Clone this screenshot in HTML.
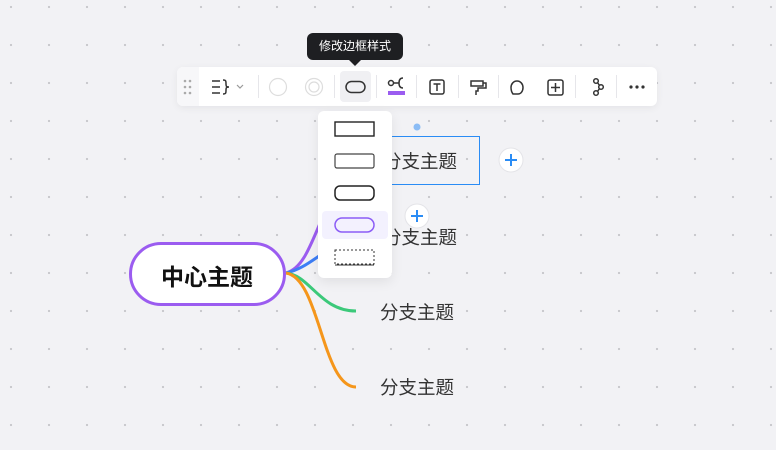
<!DOCTYPE html>
<html><head><meta charset="utf-8"><style>
*{margin:0;padding:0;box-sizing:border-box}
body{width:776px;height:450px;overflow:hidden;background:#f2f2f5;position:relative;font-family:"Liberation Sans","Noto Sans CJK SC",sans-serif;
background-image:radial-gradient(circle,#c8c8cc 1px,transparent 1.3px);background-size:38px 38px;background-position:-8px -12px}
.abs{position:absolute}
.tb{left:177px;top:67px;width:480px;height:39px;background:#fff;border-radius:6px;box-shadow:0 2px 8px rgba(0,0,0,.06)}
.sep{position:absolute;top:8px;width:1px;height:23px;background:#e6e6ea}
.tip{left:307px;top:33px;width:96px;height:27px;background:#1e1f22;border-radius:6px;color:#fff;font-size:12px;line-height:27px;text-align:center}
.tip:after{content:"";position:absolute;left:42px;bottom:-6px;border:6px solid transparent;border-top-color:#1e1f22;border-bottom:0}
.dd{left:318px;top:111px;width:74px;height:167px;background:#fff;border-radius:6px;box-shadow:0 4px 12px rgba(0,0,0,.08)}
.br{font-size:18.5px;color:#333;left:380px}
</style></head><body>
<svg class="abs" style="left:0;top:0" width="776" height="450">
<path d="M286 273 C305 268 312 240 330 200" stroke="#9b5cf0" stroke-width="3" fill="none"/>
<path d="M286 273 C300 270 310 262 322 254" stroke="#3d7ef5" stroke-width="3" fill="none"/>
<path d="M286 273 C310 275 320 311 356 311" stroke="#3cc97a" stroke-width="3" fill="none"/>
<path d="M286 273 C320 278 322 387 356 387" stroke="#f5961b" stroke-width="3" fill="none"/>
<rect x="130.5" y="243.5" width="154" height="61" rx="30.5" fill="#fff" stroke="#9b5cf0" stroke-width="3"/>
<rect x="370.5" y="136.5" width="109" height="48" fill="none" stroke="#2a8cf5" stroke-width="1"/>
<circle cx="417" cy="127" r="3.5" fill="#8bbcf5"/>
<circle cx="511" cy="160" r="12" fill="#fff" stroke="#e4e4e8"/>
<path d="M505 160h12M511 154v12" stroke="#2a8cf5" stroke-width="2"/>
<circle cx="417" cy="216" r="12" fill="#fff" stroke="#e4e4e8"/>
<path d="M411 216h12M417 210v12" stroke="#2a8cf5" stroke-width="2"/>
</svg>
<div class="abs" style="left:130px;top:258px;width:154px;text-align:center;font-size:23px;font-weight:bold;color:#111">中心主题</div>
<div class="abs br" style="top:148px;left:383px">分支主题</div>
<div class="abs br" style="top:224px;left:383px">分支主题</div>
<div class="abs br" style="top:299px">分支主题</div>
<div class="abs br" style="top:374px">分支主题</div>

<div class="abs tip">修改边框样式</div>
<div class="abs tb">
<div class="abs" style="left:0;top:0;width:22px;height:39px;background:#f7f7f9;border-radius:6px 0 0 6px"></div>
<div class="abs" style="left:163px;top:4px;width:31px;height:31px;background:#f0f0f3;border-radius:4px"></div>
<div class="sep" style="left:81px"></div><div class="sep" style="left:157px"></div><div class="sep" style="left:199px"></div>
<div class="sep" style="left:239px"></div><div class="sep" style="left:281px"></div><div class="sep" style="left:321px"></div>
<div class="sep" style="left:398px"></div><div class="sep" style="left:439px"></div>
<svg class="abs" style="left:0;top:0" width="480" height="39" fill="none" stroke="#333" stroke-width="1.5">
<g fill="#aaa" stroke="none"><circle cx="8" cy="14" r="1.3"/><circle cx="13" cy="14" r="1.3"/><circle cx="8" cy="20" r="1.3"/><circle cx="13" cy="20" r="1.3"/><circle cx="8" cy="26" r="1.3"/><circle cx="13" cy="26" r="1.3"/></g>
<path d="M35 14h8M35 20h8M35 26h8M46 13c3 0 3 1 3 4s1 3 3 3c-2 0-3 0-3 3s0 4-3 4"/>
<path d="M60 18l3 3 3-3" stroke="#999" stroke-width="1.2"/>
<circle cx="101" cy="20" r="8.5" stroke="#ddd" stroke-width="1.2"/>
<circle cx="137" cy="20" r="8.5" stroke="#ddd" stroke-width="1.2"/><circle cx="137" cy="20" r="5" stroke="#ddd" stroke-width="1.2"/>
<rect x="169" y="14.5" width="19" height="11" rx="5.5"/>
<circle cx="214" cy="16" r="2.5"/><path d="M216.5 16h6M226 11c-3 0-4 2-4 5s1 5 4 5"/>
<rect x="211" y="24" width="17" height="4" fill="#9b5cf0" stroke="none"/>
<rect x="253" y="13" width="14" height="14" rx="2"/><path d="M256.5 17h7M260 17v7"/>
<path d="M294 14h12v5h-12zM306 16h3v5h-8v3h-2v4"/>
<path d="M336 27 L341 27 C344 27 346 24 346 20.5 C346 17 343.5 14 340 14 C336.5 14 334 17 334 20.5 C334 23 334.5 25 336 27z"/>
<rect x="371" y="13" width="15" height="15" rx="2"/><path d="M378.5 16v9M374 20.5h9"/>
<circle cx="419" cy="14" r="2.3"/><circle cx="424" cy="20" r="2.3"/><circle cx="419" cy="26" r="2.3"/><path d="M420.5 15.5l2 3M422.5 21.5l-2 3"/>
<g fill="#333" stroke="none"><circle cx="454" cy="20" r="1.6"/><circle cx="460" cy="20" r="1.6"/><circle cx="466" cy="20" r="1.6"/></g>
</svg>
</div>
<div class="abs dd">
<div class="abs" style="left:4px;top:100px;width:66px;height:28px;background:#f3f1fe;border-radius:4px"></div>
<svg class="abs" style="left:0;top:0" width="74" height="167" fill="none">
<rect x="17" y="11" width="39" height="14" stroke="#222" stroke-width="1.4"/>
<rect x="17" y="43" width="39" height="14" rx="2" stroke="#444" stroke-width="1.2"/>
<rect x="17" y="75" width="39" height="14" rx="5" stroke="#222" stroke-width="1.5"/>
<rect x="17" y="107" width="39" height="14" rx="7" stroke="#8b5cf6" stroke-width="1.5"/>
<rect x="17" y="139" width="39" height="14" stroke="#333" stroke-width="1" stroke-dasharray="2 2"/>
<path d="M17 154h39" stroke="#333"/>
</svg>
</div>
</body></html>
